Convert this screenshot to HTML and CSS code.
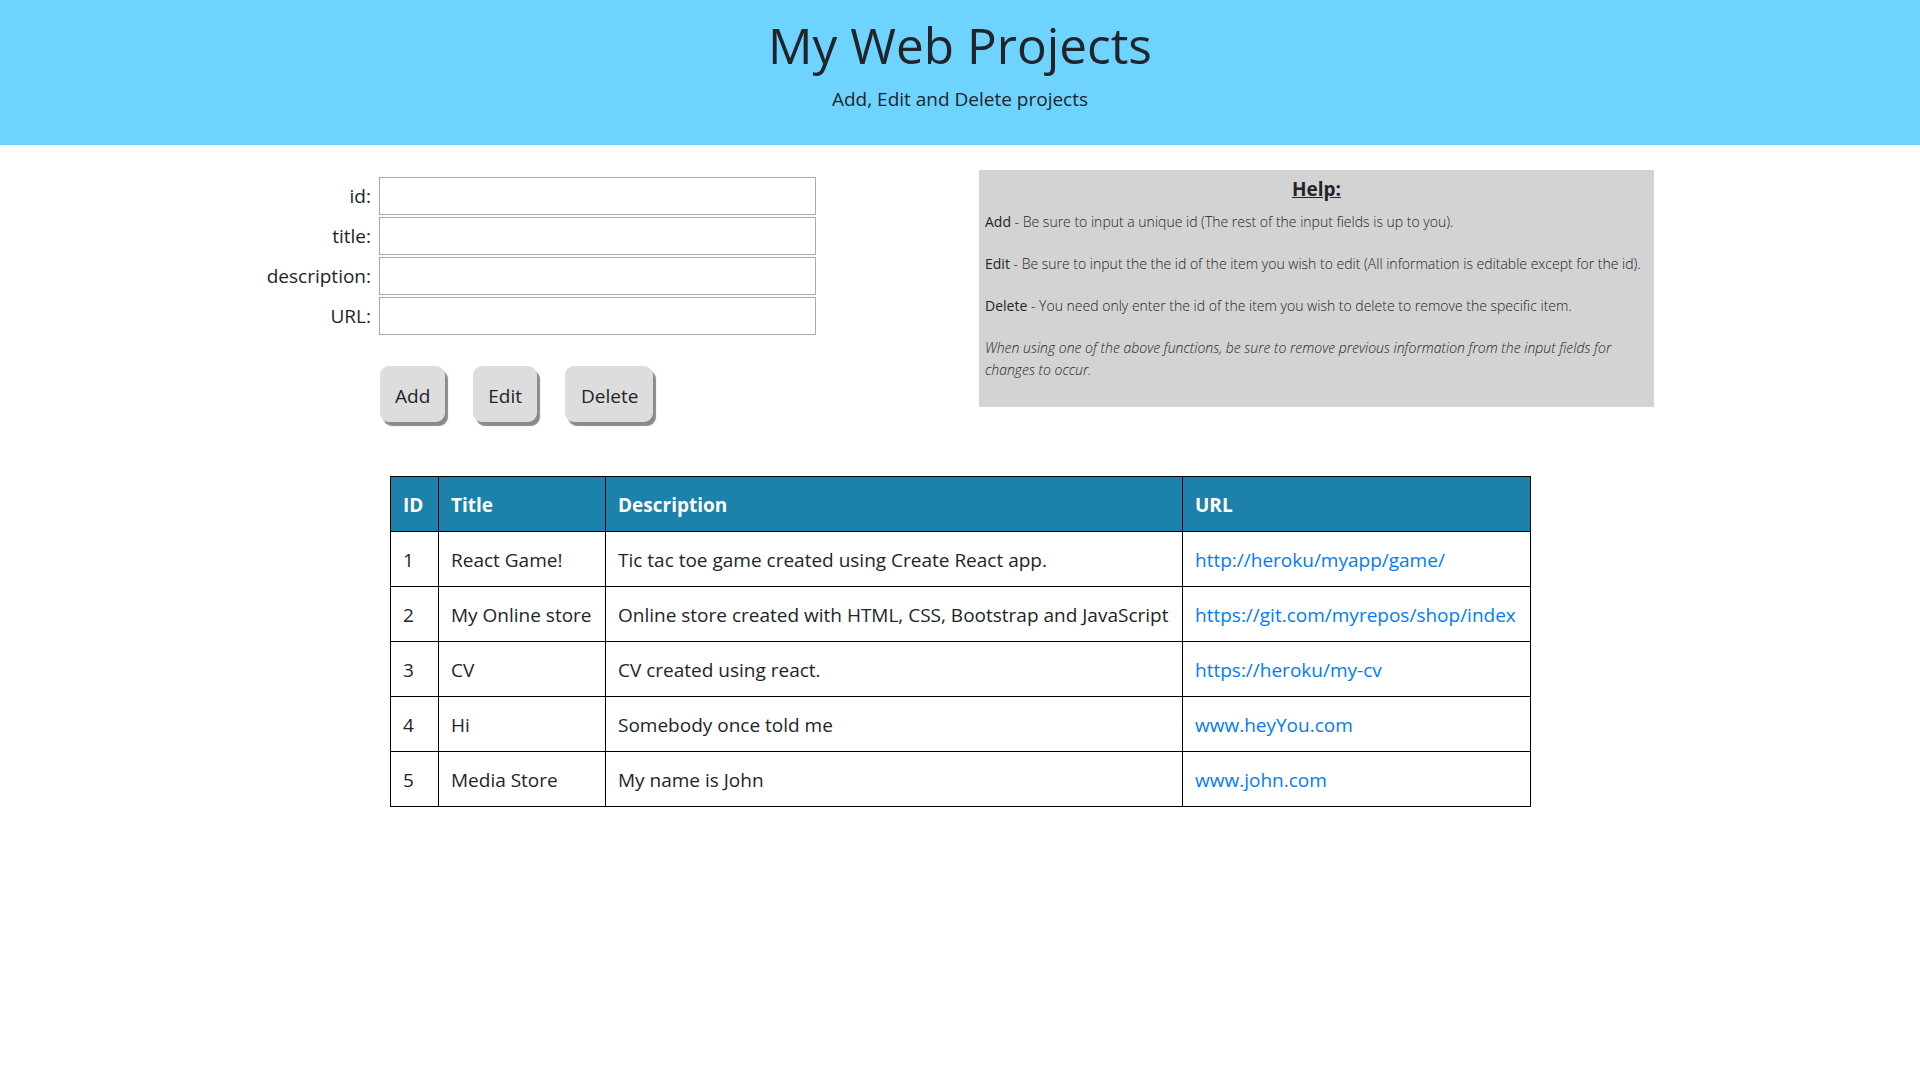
FILE: index.html
```html
<!DOCTYPE html>
<html lang="en">
<head>
<meta charset="utf-8">
<title>My Web Projects</title>
<link rel="stylesheet" href="styles.css">
</head>
<body>
<header class="hero">
  <h1 class="hero-title">My Web Projects</h1>
  <p class="hero-lead">Add, Edit and Delete projects</p>
</header>

<main class="top">
  <section class="form-col">
    <form class="proj-form">
      <label class="f-label" for="f-id">id:</label>
      <input class="f-input" id="f-id" type="text">
      <label class="f-label" for="f-title">title:</label>
      <input class="f-input" id="f-title" type="text">
      <label class="f-label" for="f-desc">description:</label>
      <input class="f-input" id="f-desc" type="text">
      <label class="f-label" for="f-url">URL:</label>
      <input class="f-input" id="f-url" type="text">
    </form>
    <div class="btn-row">
      <button class="btn" type="button">Add</button>
      <button class="btn" type="button">Edit</button>
      <button class="btn btn-del" type="button">Delete</button>
    </div>
  </section>

  <aside class="help">
    <h2 class="help-title">Help:</h2>
    <p class="help-p"><span class="help-key">Add</span> - Be sure to input a unique id (The rest of the input fields is up to you).</p>
    <p class="help-p"><span class="help-key">Edit</span> - Be sure to input the the id of the item you wish to edit (All information is editable except for the id).</p>
    <p class="help-p"><span class="help-key">Delete</span> - You need only enter the id of the item you wish to delete to remove the specific item.</p>
    <p class="help-p help-note">When using one of the above functions, be sure to remove previous information from the input fields for changes to occur.</p>
  </aside>
</main>

<div class="table-wrap">
  <table class="proj-table">
    <colgroup>
      <col class="c-id">
      <col class="c-title">
      <col class="c-desc">
      <col class="c-url">
    </colgroup>
    <thead>
      <tr><th>ID</th><th>Title</th><th>Description</th><th>URL</th></tr>
    </thead>
    <tbody>
      <tr><td>1</td><td>React Game!</td><td>Tic tac toe game created using Create React app.</td><td><a href="#">http://heroku/myapp/game/</a></td></tr>
      <tr><td>2</td><td>My Online store</td><td>Online store created with HTML, CSS, Bootstrap and JavaScript</td><td><a href="#">https://git.com/myrepos/shop/index</a></td></tr>
      <tr><td>3</td><td>CV</td><td>CV created using react.</td><td><a href="#">https://heroku/my-cv</a></td></tr>
      <tr><td>4</td><td>Hi</td><td>Somebody once told me</td><td><a href="#">www.heyYou.com</a></td></tr>
      <tr><td>5</td><td>Media Store</td><td>My name is John</td><td><a href="#">www.john.com</a></td></tr>
    </tbody>
  </table>
</div>
</body>
</html>
```

FILE: styles.css
```css
* { box-sizing: border-box; }

html, body {
  margin: 0;
  padding: 0;
  background: #ffffff;
  color: #212529;
  font-family: "Open Sans", "Noto Sans", "Liberation Sans", sans-serif;
}

/* Header */
.hero {
  background: #6ed3ff;
  text-align: center;
  padding: 14px 0 0;
  height: 145px;
}
.hero-title {
  margin: 0 0 9px;
  font-size: 49.5px;
  line-height: 62px;
  font-weight: 500;
  color: #212529;
}
.hero-lead {
  margin: 0;
  font-size: 19px;
  line-height: 28px;
  font-weight: 400;
  color: #212529;
}

/* Top section */
.top {
  display: flex;
  align-items: flex-start;
  padding-top: 25px;
}
.form-col {
  width: 979px;
  flex: none;
  padding: 7px 0 0 251px;
}
.proj-form {
  display: grid;
  grid-template-columns: 120px 437px;
  column-gap: 8px;
  row-gap: 2px;
}
.f-label {
  display: flex;
  align-items: center;
  justify-content: flex-end;
  height: 38px;
  font-size: 19px;
  line-height: 26px;
  color: #212529;
}
.f-input {
  width: 437px;
  height: 38px;
  margin: 0;
  border: 1px solid #a9a9a9;
  background: #ffffff;
  padding: 0 6px;
  font-size: 16px;
  font-family: inherit;
}

.btn-row {
  display: flex;
  gap: 28px;
  margin: 31px 0 0 129px;
}
.btn {
  height: 56px;
  padding: 3px 15px 0;
  border: none;
  border-radius: 9px;
  background: #dddddd;
  box-shadow: 3px 4px 1px #8a8a8a;
  font-family: inherit;
  font-size: 19px;
  color: #212529;
  cursor: pointer;
}
.btn-del {
  padding: 3px 15px 0 16px;
}

/* Help box */
.help {
  width: 675px;
  flex: none;
  background: #d3d3d3;
  padding: 5px 6px 6px;
}
.help-title {
  margin: 0 0 8px;
  text-align: center;
  font-size: 19px;
  line-height: 28px;
  font-weight: 700;
  text-decoration: underline;
  color: #212529;
}
.help-p {
  margin: 0 0 20px;
  font-size: 14px;
  line-height: 22px;
  font-weight: 300;
  color: #212529;
}
.help-key {
  font-weight: 400;
}
.help-note {
  font-style: italic;
}

/* Table */
.table-wrap {
  width: 1140px;
  margin: 54px auto 0;
}
.proj-table {
  width: 1140px;
  border-collapse: collapse;
  table-layout: fixed;
  font-size: 19px;
}
.c-id { width: 48px; }
.c-title { width: 167px; }
.c-desc { width: 577px; }
.c-url { width: 348px; }

.proj-table th,
.proj-table td {
  border: 1px solid #000000;
  padding: 13px 10px 11px 12px;
  line-height: 30px;
  text-align: left;
  vertical-align: top;
  white-space: nowrap;
}
.proj-table th {
  background: #1c82ab;
  color: #ffffff;
  font-weight: 700;
}
.proj-table td {
  color: #212529;
}
.proj-table a {
  color: #007bff;
  text-decoration: none;
}
```
